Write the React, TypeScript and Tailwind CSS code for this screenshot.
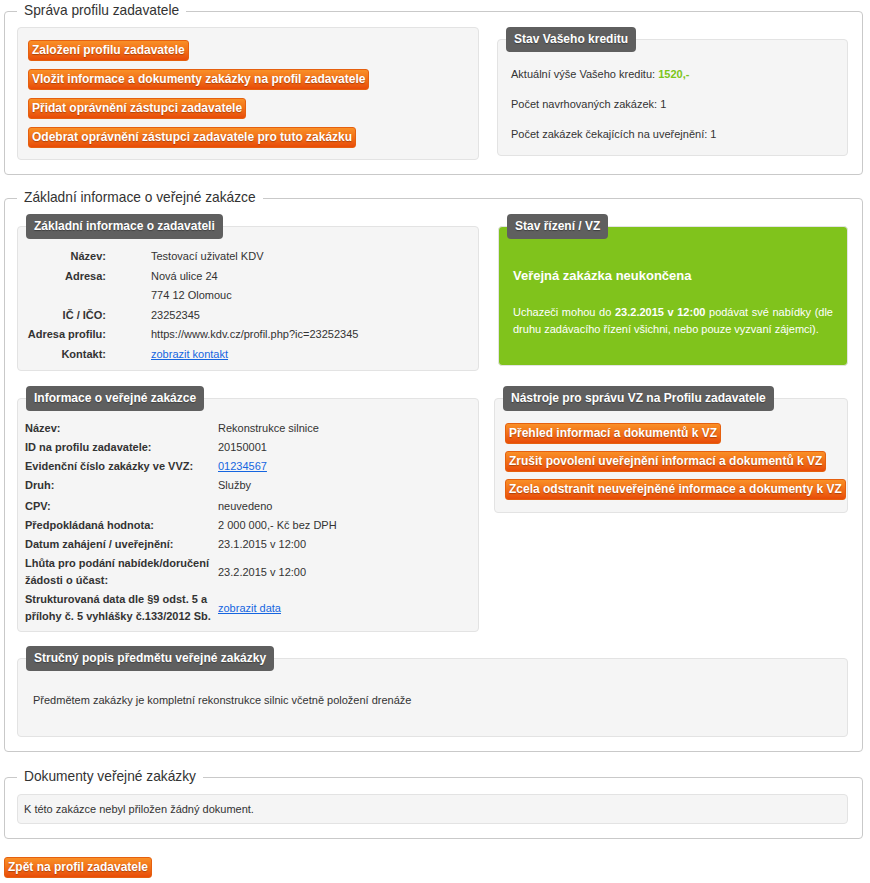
import type { ReactNode } from "react";

const FONT = { fontFamily: '"Liberation Sans", Arial, sans-serif' };

function OrangeButton({ children }: { children: ReactNode }) {
  return (
    <button className="block w-fit whitespace-nowrap rounded-[3px] border border-[#e5600f] bg-gradient-to-b from-[#f98f26] to-[#e84b08] px-[3px] text-[12px] leading-[19px] font-bold text-white [text-shadow:0_1px_1px_rgba(120,40,0,0.55)]">
      {children}
    </button>
  );
}

function Tab({ children }: { children: ReactNode }) {
  return (
    <div className="-mt-[13px] ml-2 w-fit whitespace-nowrap rounded-[4px] bg-[#5f5f5f] px-[8px] text-[12px] leading-[25px] font-bold text-white [text-shadow:0_1px_1px_rgba(0,0,0,0.35)]">
      {children}
    </div>
  );
}

function Well({ title, className = "", children }: { title?: string; className?: string; children: ReactNode }) {
  return (
    <div className={title ? "pt-3" : ""}>
      <div className={`rounded-[4px] border border-[#e3e3e3] ${className || "bg-[#f5f5f5]"}`}>
        {title && <Tab>{title}</Tab>}
        {children}
      </div>
    </div>
  );
}

function Section({ legend, children, className = "" }: { legend: string; children: ReactNode; className?: string }) {
  return (
    <fieldset className={`min-w-0 rounded-[4px] border border-[#c9c9c9] pl-[12px] pr-[14px] pt-[7px] pb-[14px] ${className}`}>
      <legend className="px-[7px] text-[13.75px] leading-[18px] text-[#333]">{legend}</legend>
      {children}
    </fieldset>
  );
}

const ZADAVATEL: [string, ReactNode][] = [
  ["Název:", "Testovací uživatel KDV"],
  ["Adresa:", "Nová ulice 24"],
  ["", "774 12 Olomouc"],
  ["IČ / IČO:", "23252345"],
  ["Adresa profilu:", "https://www.kdv.cz/profil.php?ic=23252345"],
  ["Kontakt:", <a href="#" className="text-[#1565e0] underline">zobrazit kontakt</a>],
];

const ZAKAZKA: [string, ReactNode][] = [
  ["Název:", "Rekonstrukce silnice"],
  ["ID na profilu zadavatele:", "20150001"],
  ["Evidenční číslo zakázky ve VVZ:", <a href="#" className="text-[#1565e0] underline">01234567</a>],
  ["Druh:", "Služby"],
  ["CPV:", "neuvedeno"],
  ["Předpokládaná hodnota:", "2 000 000,- Kč bez DPH"],
  ["Datum zahájení / uveřejnění:", "23.1.2015 v 12:00"],
  ["Lhůta pro podání nabídek/doručení žádosti o účast:", "23.2.2015 v 12:00"],
  ["Strukturovaná data dle §9 odst. 5 a přílohy č. 5 vyhlášky č.133/2012 Sb.", <a href="#" className="text-[#1565e0] underline">zobrazit data</a>],
];

export default function App() {
  return (
    <div style={FONT} className="min-h-[883px] bg-white pt-[2px] text-[11px] text-[#333]">
      <div className="ml-1 w-[859px]">
        {/* Správa profilu */}
        <Section legend="Správa profilu zadavatele">
          <div className="flex gap-[18px]">
            <div className="w-[462px]">
              <Well>
                <div className="flex flex-col gap-[8px] px-[10px] pt-[12px] pb-[11px]">
                  <OrangeButton>Založení profilu zadavatele</OrangeButton>
                  <OrangeButton>Vložit informace a dokumenty zakázky na profil zadavatele</OrangeButton>
                  <OrangeButton>Přidat oprávnění zástupci zadavatele</OrangeButton>
                  <OrangeButton>Odebrat oprávnění zástupci zadavatele pro tuto zakázku</OrangeButton>
                </div>
              </Well>
            </div>
            <div className="min-w-0 flex-1">
              <Well title="Stav Vašeho kreditu">
                <div className="flex flex-col gap-[16px] px-[13px] pt-[15px] pb-[14px] leading-[14px]">
                  <p>
                    Aktuální výše Vašeho kreditu: <span className="font-bold text-[#7cc51a]">1520,-</span>
                  </p>
                  <p>Počet navrhovaných zakázek: 1</p>
                  <p>Počet zakázek čekajících na uveřejnění: 1</p>
                </div>
              </Well>
            </div>
          </div>
        </Section>

        {/* Základní informace */}
        <Section legend="Základní informace o veřejné zakázce" className="mt-[14px]">
          <div className="grid grid-cols-[462px_minmax(0,1fr)] items-start gap-x-[19px] gap-y-[15px]">
            <Well title="Základní informace o zadavateli">
              <div className="grid grid-cols-[80px_1fr] gap-x-[45px] px-[8px] pt-[8px] pb-[6px] leading-[19.5px]">
                {ZADAVATEL.map(([label, value], i) => (
                  <div key={i} className="contents">
                    <div className="whitespace-nowrap text-right font-bold">{label}</div>
                    <div>{value}</div>
                  </div>
                ))}
              </div>
            </Well>

            <Well title="Stav řízení / VZ" className="bg-[#80c31c] border-[#7ab91c]">
              <div className="px-[14px] pt-[28px] pb-[27px] text-white">
                <h3 className="text-[13px] leading-[18px] font-bold">Veřejná zakázka neukončena</h3>
                <p className="mt-[19px] text-justify leading-[17px]">
                  Uchazeči mohou do <b>23.2.2015 v 12:00</b> podávat své nabídky (dle druhu zadávacího řízení všichni, nebo pouze vyzvaní zájemci).
                </p>
              </div>
            </Well>

            <Well title="Informace o veřejné zakázce">
              <div className="px-[7px] pt-[8px] pb-[5px]">
                {ZAKAZKA.map(([label, value], i) => (
                  <div key={i} className={`grid grid-cols-[188px_1fr] items-center gap-x-[5px] py-[1px] leading-[17px] ${label === "CPV:" ? "mt-[2px]" : ""}`}>
                    <div className="font-bold">{label}</div>
                    <div>{value}</div>
                  </div>
                ))}
              </div>
            </Well>

            <div className="-ml-[4px] min-w-0">
              <Well title="Nástroje pro správu VZ na Profilu zadavatele">
                <div className="flex flex-col gap-[7px] px-[10px] pt-[12px] pb-[12px]">
                  <OrangeButton>Přehled informací a dokumentů k VZ</OrangeButton>
                  <OrangeButton>Zrušit povolení uveřejnění informací a dokumentů k VZ</OrangeButton>
                  <OrangeButton>Zcela odstranit neuveřejněné informace a dokumenty k VZ</OrangeButton>
                </div>
              </Well>
            </div>
          </div>

          <div className="mt-[14px]">
            <Well title="Stručný popis předmětu veřejné zakázky">
              <p className="px-[15px] pt-[22px] pb-[29px] leading-[14px]">
                Předmětem zakázky je kompletní rekonstrukce silnic včetně položení drenáže
              </p>
            </Well>
          </div>
        </Section>

        {/* Dokumenty */}
        <Section legend="Dokumenty veřejné zakázky" className="mt-[16px]">
          <div className="pt-[1px]">
            <Well>
              <p className="px-[6px] py-[7px] leading-[14px]">K této zakázce nebyl přiložen žádný dokument.</p>
            </Well>
          </div>
        </Section>

        <div className="mt-[18px]">
          <OrangeButton>Zpět na profil zadavatele</OrangeButton>
        </div>
      </div>
    </div>
  );
}
